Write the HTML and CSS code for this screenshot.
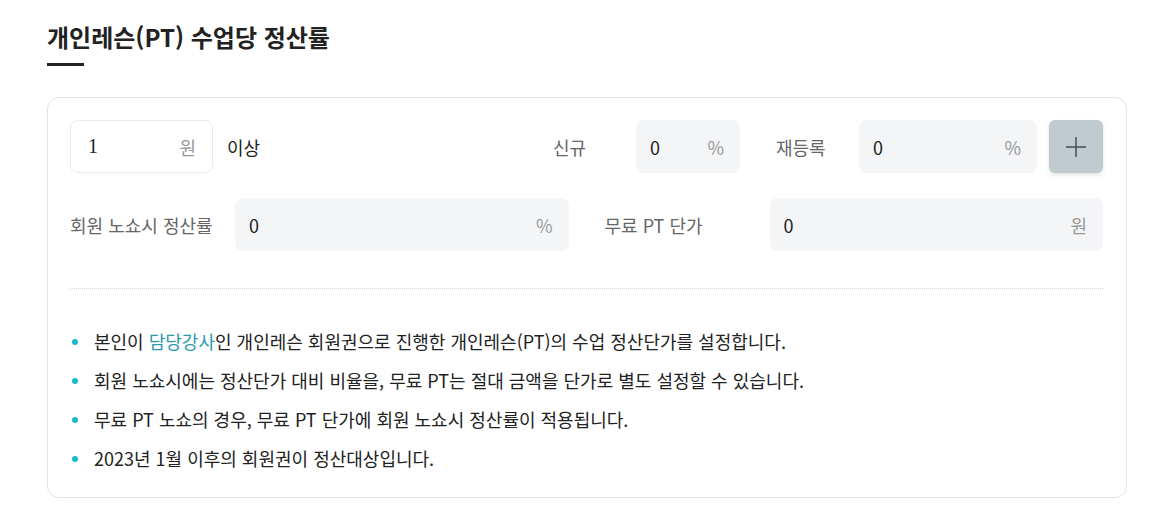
FILE: index.html
```html
<!DOCTYPE html>
<html lang="ko">

<head>
	<meta charset="UTF-8">
	<meta name="viewport" content="width=device-width, initial-scale=1.0">
	<title>개인레슨(PT) 수업당 정산률</title>
	<link rel="stylesheet" href="styles.css">
</head>

<body>
	<section class="settle">
		<h2 class="settle-title">개인레슨(PT) 수업당 정산률</h2>

		<div class="settle-card">
			<div class="settle-row">
				<label class="field field--white field--min">
					<span class="field-value field-value--serif">1</span>
					<span class="field-unit">원</span>
				</label>
				<span class="settle-suffix">이상</span>

				<span class="settle-label settle-label--short">신규</span>
				<label class="field field--new">
					<span class="field-value">0</span>
					<span class="field-unit">%</span>
				</label>

				<span class="settle-label settle-label--short settle-label--gap">재등록</span>
				<label class="field field--re">
					<span class="field-value">0</span>
					<span class="field-unit">%</span>
				</label>

				<button class="add-button" type="button" aria-label="추가">
					<svg width="22" height="22" viewBox="0 0 22 22">
						<path d="M11 1v20M1 11h20" stroke="#4a4f54" stroke-width="1.5" fill="none" />
					</svg>
				</button>
			</div>

			<div class="settle-row settle-row--split">
				<div class="settle-col">
					<span class="settle-label">회원 노쇼시 정산률</span>
					<label class="field field--grow">
						<span class="field-value">0</span>
						<span class="field-unit">%</span>
					</label>
				</div>
				<div class="settle-col">
					<span class="settle-label">무료 PT 단가</span>
					<label class="field field--grow">
						<span class="field-value">0</span>
						<span class="field-unit">원</span>
					</label>
				</div>
			</div>

			<ul class="settle-notes">
				<li>본인이 <span class="accent">담당강사</span>인 개인레슨 회원권으로 진행한 개인레슨(PT)의 수업 정산단가를 설정합니다.</li>
				<li>회원 노쇼시에는 정산단가 대비 비율을, 무료 PT는 절대 금액을 단가로 별도 설정할 수 있습니다.</li>
				<li>무료 PT 노쇼의 경우, 무료 PT 단가에 회원 노쇼시 정산률이 적용됩니다.</li>
				<li>2023년 1월 이후의 회원권이 정산대상입니다.</li>
			</ul>
		</div>
	</section>
</body>

</html>
```

FILE: styles.css
```css
body {
	margin: 0;
	padding: 0;
	background: #fff;
	color: #222;
	font-family: "Noto Sans CJK KR", "Noto Sans", sans-serif;
}

.settle {
	padding: 19px 29px 0 47px;
}

.settle-title {
	display: inline-block;
	margin: 0;
	padding-bottom: 10px;
	font-size: 24px;
	font-weight: 700;
	line-height: 36px;
	color: #222;
	position: relative;
}

.settle-title::after {
	content: "";
	position: absolute;
	left: 0;
	bottom: -1px;
	width: 37px;
	height: 3px;
	background: #222;
}

.settle-card {
	margin-top: 32px;
	border: 1px solid #e2e2e2;
	border-radius: 12px;
	padding: 22px 23px 19px 22px;
}

.settle-row {
	display: flex;
	align-items: center;
	height: 53px;
}

.settle-row--split {
	margin-top: 25px;
	gap: 36px;
	padding-bottom: 37px;
	border-bottom: 1px dotted #d6d6d6;
}

.settle-col {
	flex: 1;
	display: flex;
	align-items: center;
	gap: 20px;
	height: 53px;
}

.settle-label {
	flex: none;
	width: 145px;
	font-size: 18px;
	color: #666;
}

.settle-label--short {
	width: 63px;
	margin-left: auto;
	margin-right: 20px;
}

.settle-label--gap {
	margin-left: 36px;
}

.settle-suffix {
	margin-left: 14px;
	font-size: 18px;
	color: #222;
}

.field {
	box-sizing: border-box;
	display: flex;
	align-items: center;
	justify-content: space-between;
	height: 53px;
	padding: 0 16px 0 14px;
	border-radius: 8px;
	background: #f3f5f7;
	font-size: 18px;
}

.field--white {
	background: #fff;
	border: 1px solid #eaeaea;
	padding-left: 17px;
}

.field--min {
	width: 143px;
}

.field--new {
	width: 104px;
}

.field--re {
	width: 178px;
}

.field--grow {
	flex: 1;
}

.field-value {
	color: #222;
}

.field-value--serif {
	font-family: "Liberation Serif", serif;
	font-size: 20px;
}

.field-unit {
	color: #999;
}

.add-button {
	flex: none;
	display: flex;
	align-items: center;
	justify-content: center;
	width: 54px;
	height: 53px;
	margin-left: 12px;
	padding: 0;
	border: 0;
	border-radius: 6px;
	background: #c0cbd0;
	box-shadow: 0 2px 4px rgba(0, 0, 0, 0.12);
	cursor: pointer;
}

.settle-notes {
	margin: 33px 0 0;
	padding: 0 0 0 24px;
	list-style: none;
	font-size: 18px;
	line-height: 39px;
	color: #222;
}

.settle-notes li {
	position: relative;
}

.settle-notes li::before {
	content: "";
	position: absolute;
	left: -22px;
	top: 17px;
	width: 6px;
	height: 6px;
	border-radius: 50%;
	background: #1ab7cf;
}

.accent {
	color: #2a9cab;
}
```
